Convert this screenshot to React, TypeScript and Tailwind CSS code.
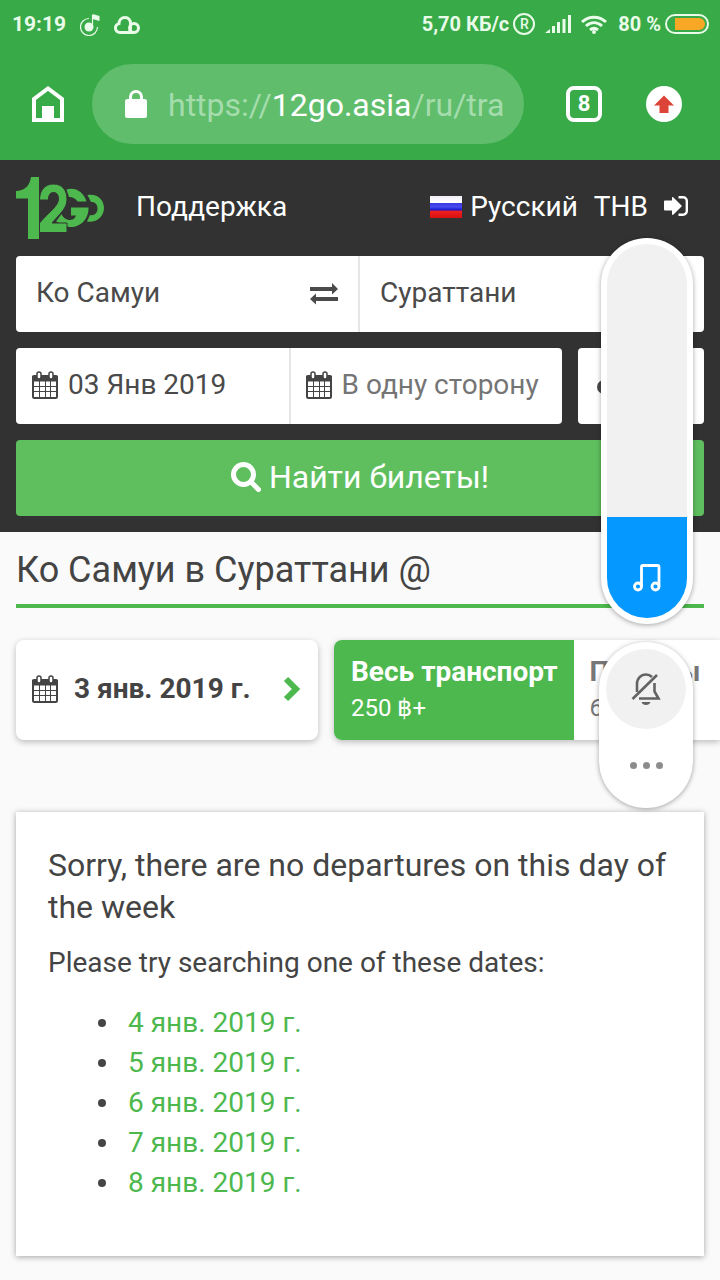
import { useState } from "react"

const dates = ["4 янв. 2019 г.", "5 янв. 2019 г.", "6 янв. 2019 г.", "7 янв. 2019 г.", "8 янв. 2019 г."]

function CalendarIcon() {
  return (
    <svg viewBox="0 0 26 28" className="h-7 w-[26px] shrink-0 text-[#444]" fill="none" stroke="currentColor" aria-hidden="true">
      <path d="M1 5.500h24v4H1z" fill="currentColor" strokeWidth="2" strokeLinejoin="round" />
      <rect x="1" y="5" width="24" height="22" rx="1.500" strokeWidth="2" />
      <path d="M7.500 10v17M13.500 10v17M18.500 10v17M1 15.500h24M1 20.500h24" strokeWidth="1" />
      <rect x="5" y="1" width="4" height="7" rx="2" fill="#fff" strokeWidth="1.500" />
      <rect x="17" y="1" width="4" height="7" rx="2" fill="#fff" strokeWidth="1.500" />
    </svg>
  )
}

function Logo() {
  return (
    <svg viewBox="0 0 88 62" className="h-[62px] w-[88px]" role="img" aria-label="12Go">
      <g fill="#4db84d">
        <path d="M71.500 18c9.500-2 16.500 4.500 16.500 13s-8 15.500-17 13.500l3-6.500c4.500 1 7.500-2 7.500-6.500s-3-7-6.500-6.500z" />
        <path d="M50.500 12.500c9-2.500 17 2.500 20 12H61.500c-2-3-4.500-4.500-8.500-4.500z" />
        <path d="M55 30.500h17.500C73 42 64 51 53 50l-13-5.500 5.500-7.500c2 5 7 7 11 5.500 1.500-.6 2.500-1.500 3.500-4H55z" />
      </g>
      <path
        d="M23.500 23C23.500 13 29 7 37.500 7S51 13 51 22c0 8-5 13-11 19.500L36 46h15v9.500H23.500V46C33 35 42.500 29 42.500 22c0-4-1.500-6.500-5-6.500S32.500 18 32.500 23z"
        fill="#4db84d"
        stroke="#323232"
        strokeWidth="1"
      />
      <path d="M0 14c8-.5 13.500-4 15-14h8v62H12V21.500H0z" fill="#4db84d" />
    </svg>
  )
}

function StatusBar() {
  return (
    <div className="flex h-12 items-center justify-between pr-[11px] pl-3 text-xl font-bold text-[#e9fbe9]">
      <div className="flex items-center pt-0.5">
        <span className="text-[21px]">19:19</span>
        <svg viewBox="0 0 20 22" className="ml-3.5 h-[22px] w-5" fill="none" stroke="currentColor" aria-hidden="true">
          <circle cx="9" cy="13" r="4.500" fill="currentColor" stroke="none" />
          <path d="M9 4.500a8.500 8.500 0 1 0 8.500 8.500M12.500 13V1" strokeWidth="1.200" />
          <path d="M12.500 0l7 2v5l-7-2z" fill="currentColor" stroke="none" />
        </svg>
        <svg viewBox="0 0 26 18" className="ml-3.5 h-[18px] w-[26px]" fill="none" stroke="currentColor" strokeWidth="3" aria-hidden="true">
          <path d="M14 16.500H6a4.500 4.500 0 0 1-1-8.900C5 4 7.500 1.500 11 1.500S16.500 4 16.500 7.500V12c0 3-1 4.500-2.500 4.500z" />
          <path d="M14 16.500h6" />
          <circle cx="20" cy="12" r="4.500" />
        </svg>
      </div>
      <div className="flex items-center">
        <span>5,70 КБ/с</span>
        <span className="ml-1 flex size-[22px] items-center justify-center rounded-full border-2 border-current text-sm leading-none font-medium">R</span>
        <svg viewBox="0 0 26 18" className="ml-2.5 h-[18px] w-[26px]" fill="currentColor" aria-hidden="true">
          <path d="M0 18l5-4v4zM7 11h3v7H7zM12 7h3v11h-3zM17.500 4h3v14h-3zM23 0h3v18h-3z" />
        </svg>
        <svg viewBox="0 0 26 19" className="ml-2.5 h-[19px] w-[26px]" fill="none" stroke="currentColor" strokeWidth="3" aria-hidden="true">
          <path d="M1 7C8 .5 18 .5 25 7M5 11c5-4.500 11-4.500 16 0M9 15c2.500-2 5.500-2 8 0" />
          <circle cx="13" cy="17" r="2" fill="currentColor" stroke="none" />
        </svg>
        <span className="ml-[11px]">80 %</span>
        <span className="ml-1 flex h-5 w-11 justify-end rounded-full border-2 border-current p-0.5">
          <span className="w-[30px] rounded-l-xs rounded-r-full bg-[#f9a825]" />
        </span>
      </div>
    </div>
  )
}

function BrowserBar() {
  return (
    <div className="flex h-28 items-center pr-[38px] pl-8">
      <button aria-label="Home" className="shrink-0 text-white">
        <svg viewBox="0 0 32 36" className="h-9 w-8" aria-hidden="true">
          <path d="M2 34V13L16 2.500 30 13v21z" fill="none" stroke="currentColor" strokeWidth="4" />
          <path d="M10 20h12v14H10z" fill="currentColor" />
        </svg>
      </button>
      <div className="ml-7 flex h-20 min-w-0 flex-1 items-center rounded-full bg-[#5fbd6c] pl-[33px]">
        <svg viewBox="0 0 22 28" className="h-7 w-[22px] shrink-0 text-white" aria-hidden="true">
          <rect y="9" width="22" height="19" rx="2.500" fill="currentColor" />
          <path d="M5.500 10V7a5.500 5.500 0 0 1 11 0v3" fill="none" stroke="currentColor" strokeWidth="3" />
        </svg>
        <span className="ml-[21px] pt-0.5 text-[32px] whitespace-nowrap text-[#a5dcac]">
          https://<span className="text-white">12go.asia</span>/ru/tra
        </span>
      </div>
      <button aria-label="Tabs" className="ml-[42px] size-9 shrink-0 rounded-lg border-4 border-white text-[22px] leading-none font-bold text-white">
        8
      </button>
      <button aria-label="Update" className="ml-11 size-9 shrink-0 rounded-full bg-white">
        <svg viewBox="0 0 36 36" className="size-9" aria-hidden="true">
          <path d="M18 9.500l10 10h-5.500V27h-9v-7.500H8z" fill="#db4437" />
        </svg>
      </button>
    </div>
  )
}

function SearchHeader() {
  return (
    <header className="bg-[#323232] px-4 pb-4 text-[28px] text-white">
      <nav className="flex h-24 items-center">
        <a href="#home"><Logo /></a>
        <a href="#support" className="ml-8 pb-0.5">Поддержка</a>
        <button className="ml-auto flex items-center gap-2 pb-0.5">
          <svg viewBox="0 0 32 22" className="h-[22px] w-8" aria-hidden="true">
            <defs>
              <linearGradient id="flag" x1="0" y1="0" x2="0" y2="1">
                <stop offset="0" stopColor="#f2eef8" />
                <stop offset="0.3" stopColor="#ffffff" />
                <stop offset="0.34" stopColor="#3a3ae6" />
                <stop offset="0.5" stopColor="#4a4aee" />
                <stop offset="0.64" stopColor="#1414cc" />
                <stop offset="0.68" stopColor="#f02020" />
                <stop offset="1" stopColor="#d81010" />
              </linearGradient>
            </defs>
            <path d="M0 0h32v22H0z" fill="url(#flag)" />
          </svg>
          Русский
        </button>
        <button className="ml-4 pb-0.5">THB</button>
        <button aria-label="Войти" className="mx-4 pb-1">
          <svg viewBox="0 0 24 20" className="h-5 w-6" aria-hidden="true">
            <path d="M0 5.500q0-1 1-1h7V2q0-1.500 1.500-.5l8.500 8.500-8.500 8.500Q8 19.500 8 18v-3.500H1q-1 0-1-1z" fill="currentColor" />
            <path d="M14.500 1.200H19A3.800 3.800 0 0 1 22.800 5v10a3.800 3.800 0 0 1-3.800 3.800h-4.500" fill="none" stroke="currentColor" strokeWidth="2.400" />
          </svg>
        </button>
      </nav>
      <form className="flex flex-col gap-4 text-[#4a4a4a]" onSubmit={(e) => e.preventDefault()}>
        <div className="grid h-[76px] grid-cols-2 overflow-hidden rounded-sm bg-white">
          <div className="flex min-w-0 items-center border-r-2 border-[#e6e6e6] px-5">
            <input aria-label="Откуда" defaultValue="Ко Самуи" className="min-w-0 flex-1 pb-0.5 outline-none" />
            <button type="button" aria-label="Поменять местами">
              <svg viewBox="0 0 28 22" className="h-[22px] w-7" fill="currentColor" aria-hidden="true">
                <path d="M0 4h22V0l6 6-6 5.500V8H0zM28 14H6v-3.500L0 16l6 5.500V18h22z" />
              </svg>
            </button>
          </div>
          <input aria-label="Куда" defaultValue="Сураттани" className="min-w-0 px-5 pb-0.5 outline-none" />
        </div>
        <div className="flex h-[76px] gap-4">
          <div className="flex flex-1 overflow-hidden rounded-sm bg-white">
            <label className="flex flex-1 items-center gap-2.5 border-r-2 border-[#e6e6e6] pb-0.5 pl-4">
              <CalendarIcon />
              <input aria-label="Туда" defaultValue="03 Янв 2019" className="w-full min-w-0 outline-none" />
            </label>
            <label className="flex flex-1 items-center gap-2.5 pb-0.5 pl-[15px]">
              <CalendarIcon />
              <input aria-label="Обратно" placeholder="В одну сторону" className="w-full min-w-0 outline-none placeholder:text-[#757575]" />
            </label>
          </div>
          <button type="button" aria-label="Пассажиры" className="w-[126px] rounded-sm bg-white pl-[18px]">
            <svg viewBox="0 0 24 24" className="size-6" fill="currentColor" aria-hidden="true">
              <circle cx="13" cy="6" r="5" />
              <rect x="1" y="6" width="23" height="14" rx="7" />
            </svg>
          </button>
        </div>
        <button className="flex h-[76px] items-center justify-center gap-2 rounded-sm bg-[#5fbf5f] pb-0.5 text-[32px] text-white">
          <svg viewBox="0 0 30 30" className="size-[30px]" fill="none" stroke="currentColor" strokeWidth="5" aria-hidden="true">
            <circle cx="12.500" cy="12.500" r="10" />
            <path d="M20 20l7.500 7.500" strokeLinecap="round" />
          </svg>
          Найти билеты!
        </button>
      </form>
    </header>
  )
}

function VolumePanel() {
  const [volume, setVolume] = useState(27)

  return (
    <aside className="absolute top-[238px] right-[27px] flex flex-col items-end gap-[18px]">
      <div className="h-[386px] w-[92px] rounded-full bg-white p-1.5 shadow-[0_1px_5px_rgba(0,0,0,0.35)]">
        <div className="relative flex h-full flex-col justify-end overflow-hidden rounded-full bg-[#f1f1f1]">
          <div className="flex items-end justify-center bg-[#0598ff] pb-[26px]" style={{ height: `${volume}%` }}>
            <svg viewBox="0 0 28 28" className="size-7" fill="none" stroke="#fff" strokeWidth="2.800" strokeLinejoin="round" aria-hidden="true">
              <circle cx="5" cy="22.500" r="3.500" />
              <circle cx="22.500" cy="22.500" r="3.500" />
              <path d="M8.500 22.500V3q0-1.500 1.500-1.500h14.500q1.500 0 1.500 1.500v19.500" />
            </svg>
          </div>
          <input
            type="range"
            aria-label="Volume"
            value={volume}
            onChange={(e) => setVolume(Number(e.target.value))}
            className="absolute inset-0 h-full w-full opacity-0 [writing-mode:vertical-lr] [direction:rtl]"
          />
        </div>
      </div>
      <div className="flex h-[166px] w-[94px] flex-col items-center rounded-full bg-white pt-[7px] shadow-[0_1px_5px_rgba(0,0,0,0.35)]">
        <button aria-label="Mute" className="flex size-20 items-center justify-center rounded-full bg-[#f1f1f1]">
          <svg viewBox="0 0 30 32" className="h-8 w-[30px]" fill="none" stroke="#636363" strokeWidth="2.600" aria-hidden="true">
            <path d="M6 19v-8c0-5.500 4-9.500 9-9.500 2.500 0 4.500 1 6 2.500M23.500 10v8.500l4 7H8" />
            <path d="M1.500 26L26 2" />
            <path d="M10.500 29h9c-1 4-8 4-9 0z" fill="#636363" stroke="none" />
          </svg>
        </button>
        <button aria-label="More" className="mt-[33px] flex gap-1.5">
          <span className="size-[7px] rounded-full bg-[#8c8c8c]" />
          <span className="size-[7px] rounded-full bg-[#8c8c8c]" />
          <span className="size-[7px] rounded-full bg-[#8c8c8c]" />
        </button>
      </div>
    </aside>
  )
}

export default function App() {
  return (
    <div className="relative min-h-screen overflow-hidden bg-[#fafafa] font-[Roboto,sans-serif] text-[#444]">
      <div className="bg-[#38aa48]">
        <StatusBar />
        <BrowserBar />
      </div>
      <SearchHeader />
      <main className="pb-6 pl-4">
        <h1 className="mr-4 flex h-19 items-center border-b-4 border-[#4db84d] pt-1 text-4xl">Ко Самуи в Сураттани @</h1>
        <div className="mt-8 flex h-[100px] gap-4">
          <button className="flex w-[302px] shrink-0 items-center rounded-lg bg-white px-4 pb-0.5 text-[28px] font-bold shadow-[0_2px_6px_rgba(0,0,0,0.25)]">
            <CalendarIcon />
            <span className="ml-4 whitespace-nowrap">3 янв. 2019 г.</span>
            <svg viewBox="0 0 18 26" className="mr-px ml-auto h-[26px] w-[18px]" fill="none" stroke="#4db84d" strokeWidth="6" aria-hidden="true">
              <path d="M3 3l10 10L3 23" />
            </svg>
          </button>
          <div className="flex min-w-0 flex-1 overflow-hidden rounded-l-lg bg-white shadow-[0_2px_6px_rgba(0,0,0,0.25)]">
            <button className="flex shrink-0 flex-col justify-center bg-[#4db84d] pr-4 pl-[17px] text-left whitespace-nowrap text-white">
              <span className="text-[28px] leading-9 font-bold">Весь транспорт</span>
              <span className="text-2xl leading-9">250 ฿+</span>
            </button>
            <button className="flex shrink-0 flex-col justify-center px-4 text-left whitespace-nowrap text-[#777]">
              <span className="text-[28px] leading-9 font-bold">Паромы</span>
              <span className="text-2xl leading-9">600 ฿+</span>
            </button>
          </div>
        </div>
        <section className="mt-[72px] mr-4 bg-white px-8 pt-8 pb-[53px] shadow-[0_1px_6px_rgba(0,0,0,0.35)]">
          <h2 className="text-[32px] leading-[42px]">Sorry, there are no departures on this day of the week</h2>
          <p className="mt-[15px] text-[28px] leading-10">Please try searching one of these dates:</p>
          <ul className="mt-5 pl-[50px] text-[28px] leading-10">
            {dates.map((date) => (
              <li
                key={date}
                className="flex items-center before:mr-[22px] before:size-2 before:rounded-full before:bg-[#444]"
              >
                <a href="#date" className="text-[#4db84d]">{date}</a>
              </li>
            ))}
          </ul>
        </section>
      </main>
      <VolumePanel />
    </div>
  )
}
